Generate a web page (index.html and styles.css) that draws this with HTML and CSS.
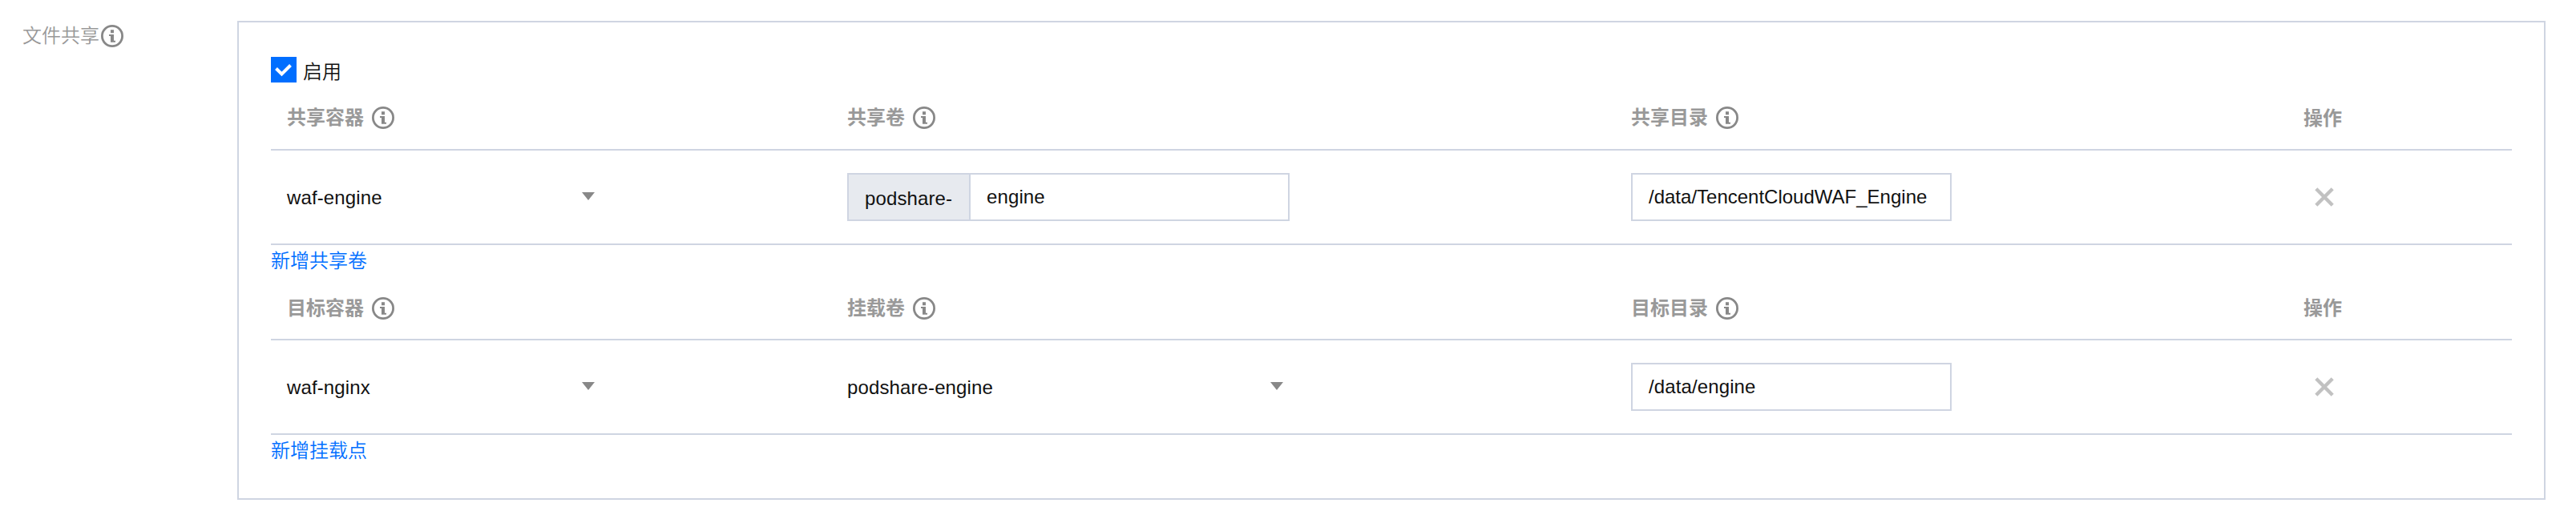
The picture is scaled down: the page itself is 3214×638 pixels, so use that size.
FILE: index.html
```html
<!DOCTYPE html>
<html lang="zh-CN">
<head>
<meta charset="utf-8">
<title>文件共享</title>
<link rel="stylesheet" href="styles.css">
</head>
<body>
<svg class="sprite" aria-hidden="true">
  <symbol id="info" viewBox="0 0 28 28">
    <circle cx="14" cy="14" r="12.6" fill="none" stroke="#888" stroke-width="2.8"/>
    <path d="M12 6.3h4v4h-4zM10 12h6v7.8h2v2h-6v-7.8h-2z" fill="#888"/>
  </symbol>
  <symbol id="close" viewBox="0 0 24 24">
    <path d="M1.8 1.8l20.4 20.4M22.2 1.8L1.8 22.2" fill="none" stroke="#c1c1c1" stroke-width="4.4"/>
  </symbol>
</svg>
<div class="form-row">
  <div class="form-label"><span>文件共享</span><svg class="info"><use href="#info"/></svg></div>
  <div class="panel">
    <label class="check"><span class="box"><svg viewBox="0 0 32 32"><path d="M6.5 14.5l7 7L24.5 10.5" fill="none" stroke="#fff" stroke-width="4"/></svg></span><span>启用</span></label>
    <div class="table">
      <div class="row head">
        <div class="cell"><span>共享容器</span><svg class="info"><use href="#info"/></svg></div>
        <div class="cell"><span>共享卷</span><svg class="info"><use href="#info"/></svg></div>
        <div class="cell"><span>共享目录</span><svg class="info"><use href="#info"/></svg></div>
        <div class="cell action">操作</div>
      </div>
      <div class="row body">
        <div class="cell"><div class="select narrow"><span>waf-engine</span><i class="caret"></i></div></div>
        <div class="cell"><div class="group"><span class="addon">podshare-</span><div class="input">engine</div></div></div>
        <div class="cell"><div class="input long">/data/TencentCloudWAF_Engine</div></div>
        <div class="cell action"><svg class="close"><use href="#close"/></svg></div>
      </div>
    </div>
    <a class="add">新增共享卷</a>
    <div class="table second">
      <div class="row head">
        <div class="cell"><span>目标容器</span><svg class="info"><use href="#info"/></svg></div>
        <div class="cell"><span>挂载卷</span><svg class="info"><use href="#info"/></svg></div>
        <div class="cell"><span>目标目录</span><svg class="info"><use href="#info"/></svg></div>
        <div class="cell action">操作</div>
      </div>
      <div class="row body">
        <div class="cell"><div class="select narrow"><span>waf-nginx</span><i class="caret"></i></div></div>
        <div class="cell"><div class="select wide"><span>podshare-engine</span><i class="caret"></i></div></div>
        <div class="cell"><div class="input">/data/engine</div></div>
        <div class="cell action"><svg class="close"><use href="#close"/></svg></div>
      </div>
    </div>
    <a class="add">新增挂载点</a>
  </div>
</div>
</body>
</html>
```

FILE: styles.css
```css
* { box-sizing: border-box; }

body {
  margin: 0;
  background: #fff;
  color: #111;
  font: 24px/36px "Liberation Sans", "Noto Sans CJK SC", sans-serif;
}

.sprite { display: none; }

.form-row {
  display: flex;
  align-items: flex-start;
  height: 638px;
  padding: 26px 38px 14px 28px;
}

.form-label {
  display: flex;
  align-items: center;
  gap: 2px;
  width: 268px;
  height: 38px;
  color: #999;
  font-weight: 350;
}

.info { display: block; width: 28px; height: 28px; flex: none; }

.panel {
  width: 2880px;
  height: 598px;
  border: 2px solid #cfd5e2;
  padding: 43px 40px 0;
}

.check { display: flex; gap: 8px; height: 34px; font-weight: 350; }

.check > span { line-height: 37px; }

.box { width: 32px; height: 32px; background: #006eff; }

.box svg { display: block; width: 32px; height: 32px; }

.row {
  display: grid;
  grid-template-columns: 699px 978px 839px 280px;
  border-bottom: 2px solid #cfd5e2;
}

.cell { display: flex; align-items: center; padding: 0 20px; }

.head { height: 83px; padding-top: 3px; }

.head .cell {
  gap: 10px;
  color: #999;
  font-weight: 700;
}

.head .action { padding-top: 2px; }

.body { height: 118px; letter-spacing: 0.12px; }

.body .action { padding-left: 34px; }

.select { display: flex; align-items: center; justify-content: space-between; }

.select span { padding-top: 1px; }

.narrow { width: 384px; }

.wide { width: 544px; }

.caret {
  border: 8px solid transparent;
  border-top: 10px solid #888;
  border-bottom: 0;
  margin-top: -2px;
}

.input {
  width: 400px;
  height: 60px;
  border: 2px solid #cfd5e2;
  padding: 0 20px;
  line-height: 56px;
  white-space: nowrap;
}

.long { letter-spacing: 0; }

.group { display: flex; }

.addon {
  width: 152px;
  height: 60px;
  border: 2px solid #cfd5e2;
  border-right: 0;
  padding-left: 20px;
  background: #e7eaef;
  line-height: 60px;
}

.close { display: block; width: 24px; height: 24px; }

.add { display: block; height: 40px; line-height: 40px; color: #006eff; font-weight: 350; }

.second .head { height: 79px; padding-top: 1px; }

.second .head .action { padding-top: 0; }
```
